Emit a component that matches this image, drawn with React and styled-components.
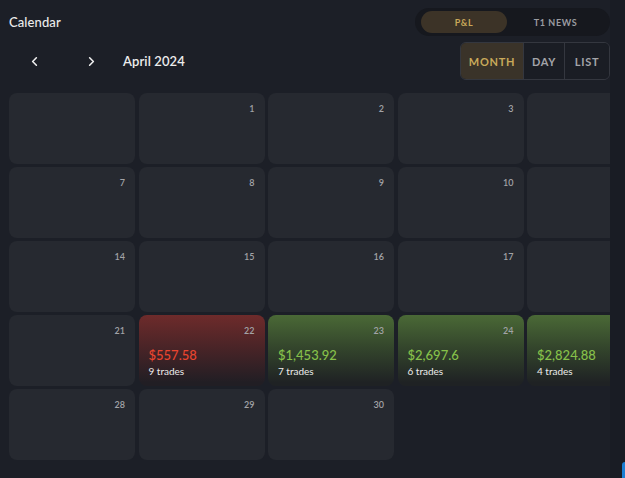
import React from "react";
import styled, { createGlobalStyle } from "styled-components";
import { ChevronLeft, ChevronRight } from "lucide-react";

const Global = createGlobalStyle`
  html, body { margin: 0; padding: 0; background: #1c1f27; }
  body { font-family: "Lato", "Open Sans", sans-serif; color: #e6e6e6; overflow: hidden; }
  * { box-sizing: border-box; }
`;

const Page = styled.div`
  width: 625px;
  height: 478px;
  position: relative;
  padding: 0 15px 0 9px;
  background: linear-gradient(to right, #1c1f27 0, #1c1f27 610px, #191c24 610px);
`;

const TopBar = styled.div`
  height: 44px;
  display: flex;
  align-items: center;
  justify-content: space-between;
`;

const Title = styled.div`
  font-size: 13px;
  font-weight: 500;
  color: #ececec;
  letter-spacing: 0.1px;
`;

const Toggle = styled.div`
  width: 195px;
  height: 28px;
  border-radius: 14px;
  background: #16181e;
  display: flex;
  align-items: center;
  padding: 0 6px;
`;

const ToggleItem = styled.div`
  height: 22px;
  width: ${(p) => (p.$active ? "86px" : "auto")};
  flex: ${(p) => (p.$active ? "none" : "1")};
  border-radius: 11px;
  background: ${(p) => (p.$active ? "#3c3327" : "transparent")};
  color: ${(p) => (p.$active ? "#c9a95a" : "#9b9ca1")};
  font-size: 9px;
  font-weight: 700;
  letter-spacing: 0.6px;
  display: flex;
  align-items: center;
  justify-content: center;
`;

const NavBar = styled.div`
  height: 38px;
  margin-top: -2px;
  display: flex;
  align-items: center;
`;

const NavButton = styled.button`
  background: none;
  border: none;
  color: #f0f0f0;
  padding: 0;
  width: 16px;
  height: 16px;
  display: flex;
  align-items: center;
  justify-content: center;
  margin-left: ${(p) => p.$ml}px;
  cursor: pointer;
`;

const Month = styled.div`
  margin-left: 24px;
  font-size: 13px;
  font-weight: 600;
  color: #ececec;
  letter-spacing: 0.1px;
`;

const Segments = styled.div`
  margin-left: auto;
  height: 38px;
  display: flex;
  border: 1px solid #34373f;
  border-radius: 6px;
  overflow: hidden;
`;

const Segment = styled.div`
  width: ${(p) => p.$w}px;
  display: flex;
  align-items: center;
  justify-content: center;
  font-size: 11px;
  font-weight: 700;
  letter-spacing: 0.7px;
  color: ${(p) => (p.$active ? "#c9a95a" : "#a3a4a8")};
  background: ${(p) => (p.$active ? "#3a3329" : "#1a1d24")};
  & + & { border-left: 1px solid #34373f; }
`;

const Viewport = styled.div`
  margin-top: 13px;
  width: 601px;
  overflow: hidden;
`;

const Grid = styled.div`
  display: grid;
  grid-template-columns: repeat(7, 126px);
  grid-auto-rows: 71px;
  column-gap: 3.5px;
  row-gap: 3px;
`;

const Cell = styled.div`
  border-radius: 8px;
  background: ${(p) =>
    p.$tone === "loss"
      ? "linear-gradient(to bottom, #6e2b2b 0%, #4a2427 45%, #211e24 95%)"
      : p.$tone === "win"
      ? "linear-gradient(to bottom, #4a6936 0%, #34462c 45%, #1f2224 95%)"
      : "#262930"};
  display: flex;
  flex-direction: column;
  padding: 10px 10px 8px 10px;
`;

const DayNum = styled.div`
  align-self: flex-end;
  font-size: 9px;
  font-weight: 600;
  color: #a2a3a7;
  height: 12px;
  line-height: 12px;
`;

const Amount = styled.div`
  margin-top: auto;
  font-size: 13px;
  font-weight: 500;
  color: ${(p) => (p.$tone === "loss" ? "#e9452f" : "#86c04a")};
  line-height: 16px;
`;

const Trades = styled.div`
  font-size: 10px;
  color: #ececec;
  line-height: 14px;
  margin-top: 1px;
`;

const Widget = styled.div`
  position: absolute;
  right: 0;
  bottom: 0;
  width: 3px;
  height: 16px;
  border-radius: 3px 0 0 0;
  background: #1a7fd4;
`;

const pnl = {
  22: { tone: "loss", amount: "$557.58", trades: 9 },
  23: { tone: "win", amount: "$1,453.92", trades: 7 },
  24: { tone: "win", amount: "$2,697.6", trades: 6 },
  25: { tone: "win", amount: "$2,824.88", trades: 4 },
};

const cells = [];
cells.push({ key: "e0", day: null });
for (let d = 1; d <= 30; d++) cells.push({ key: "d" + d, day: d });

export default function App() {
  return (
    <>
      <Global />
      <Page>
        <TopBar>
          <Title>Calendar</Title>
          <Toggle>
            <ToggleItem $active>P&amp;L</ToggleItem>
            <ToggleItem>T1 NEWS</ToggleItem>
          </Toggle>
        </TopBar>
        <NavBar>
          <NavButton $ml={17}>
            <ChevronLeft size={15} strokeWidth={2.5} />
          </NavButton>
          <NavButton $ml={41}>
            <ChevronRight size={15} strokeWidth={2.5} />
          </NavButton>
          <Month>April 2024</Month>
          <Segments>
            <Segment $w={62} $active>MONTH</Segment>
            <Segment $w={41}>DAY</Segment>
            <Segment $w={45}>LIST</Segment>
          </Segments>
        </NavBar>
        <Viewport>
          <Grid>
            {cells.map((c) => {
              const p = c.day ? pnl[c.day] : null;
              return (
                <Cell key={c.key} $tone={p ? p.tone : undefined}>
                  <DayNum>{c.day || ""}</DayNum>
                  {p && (
                    <>
                      <Amount $tone={p.tone}>{p.amount}</Amount>
                      <Trades>{p.trades} trades</Trades>
                    </>
                  )}
                </Cell>
              );
            })}
          </Grid>
        </Viewport>
        <Widget />
      </Page>
    </>
  );
}
